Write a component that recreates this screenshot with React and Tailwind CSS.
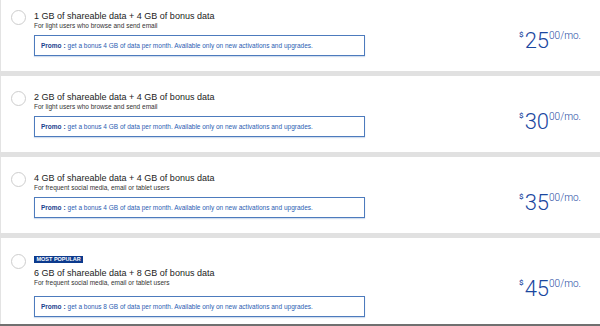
import React from 'react';

const plans = [
    { gb: 1, bonus: 4, desc: 'For light users who browse and send email', price: 25 },
    { gb: 2, bonus: 4, desc: 'For light users who browse and send email', price: 30 },
    { gb: 4, bonus: 4, desc: 'For frequent social media, email or tablet users', price: 35 },
    { gb: 6, bonus: 8, desc: 'For frequent social media, email or tablet users', price: 45, popular: true },
];

function Price({ value }) {
    return (
        <div className="flex items-start text-[#1a479f]" style={{ fontFamily: 'Roboto, "Liberation Sans", sans-serif' }}>
            <span className="text-[8px] leading-none mt-[1px] font-medium">$</span>
            <span className="text-[22px] leading-none ml-[1px] font-light">{value}</span>
            <span className="text-[10px] leading-none mt-[1px] font-light">00/mo.</span>
        </div>
    );
}

function PlanCard({ plan, first, last }) {
    return (
        <div className={`bg-white border-l border-[#e3e3e3] flex items-start pl-[10px] pr-[19px] ${first ? '-mt-[5px]' : ''} ${last ? 'flex-1 pt-[16px]' : 'h-[76px] pt-[15px]'}`}>
            <div className="w-[15px] h-[15px] rounded-full border border-[#cdcdcd] shrink-0" />
            <div className="ml-[8px] flex flex-col">
                {plan.popular && (
                    <span className="mt-[2px] mb-[4px] w-fit bg-[#0c3a8d] text-white text-[5.5px] font-bold leading-[7px] px-[2.5px]">MOST POPULAR</span>
                )}
                <div className="text-[9px] leading-[11px] text-[#222] mt-[1px]">
                    {plan.gb} GB of shareable data + {plan.bonus} GB of bonus data
                </div>
                <div className="text-[6.5px] leading-[8px] text-[#333]">{plan.desc}</div>
                <div className={`${plan.popular ? 'mt-[9px]' : 'mt-[5px]'} w-[331px] h-[21px] border border-[#4d7bbd] shadow-[0_1px_1px_rgba(77,123,189,0.25)] flex items-center px-[6px] text-[6.5px] text-[#2b5db2]`}>
                    <span className="font-bold text-[#1b3f8e]">Promo :</span>
                    <span className="ml-[2px]">get a bonus {plan.bonus} GB of data per month. Available only on new activations and upgrades.</span>
                </div>
            </div>
            <div className="ml-auto self-center">
                <Price value={plan.price} />
            </div>
        </div>
    );
}

export default function App() {
    return (
        <div className="w-[600px] h-[326px] overflow-hidden bg-[#e1e1e1] flex flex-col" style={{ fontFamily: '"Liberation Sans", Arial, sans-serif' }}>
            <div className="flex flex-col gap-[5px] flex-1">
                {plans.map((p, i) => (
                    <PlanCard key={p.gb} plan={p} first={i === 0} last={i === plans.length - 1} />
                ))}
            </div>
            <div className="h-[2px] bg-[#707070]" />
        </div>
    );
}
